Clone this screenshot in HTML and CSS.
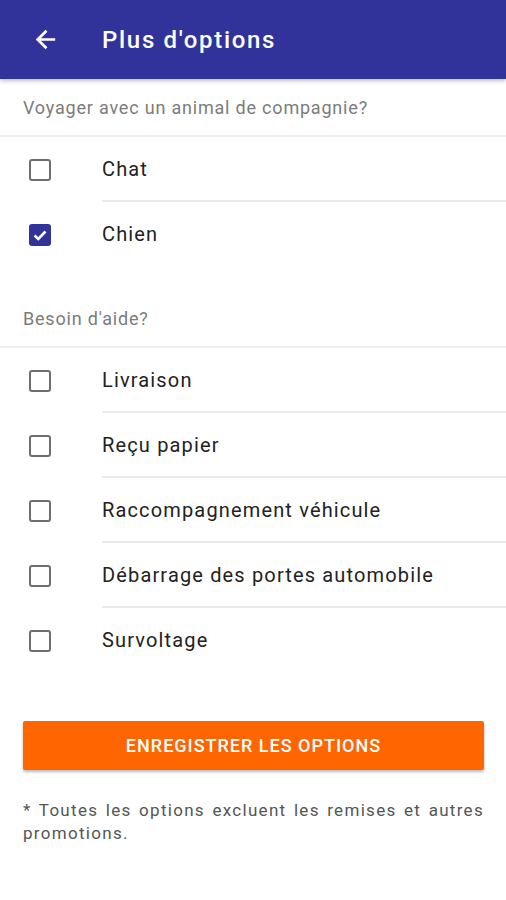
FILE: index.html
```html
<!DOCTYPE html>
<html lang="fr">
<head>
<meta charset="utf-8">
<title>Plus d'options</title>
<link rel="stylesheet" href="styles.css">
</head>
<body>
<header class="appbar">
  <svg class="back" width="24" height="24" viewBox="0 0 24 24"><path d="M20 12H5M12 4.5L4.5 12L12 19.5" fill="none" stroke="#fff" stroke-width="2.6" stroke-linecap="square"/></svg>
  <h1 class="title">Plus d'options</h1>
</header>
<main>
  <section class="section">
    <div class="section-head">Voyager avec un animal de compagnie?</div>
    <ul class="list">
      <li class="row"><span class="cb"></span><span class="label">Chat</span></li>
      <li class="row"><span class="cb checked"><svg viewBox="0 0 22 22" width="22" height="22"><path d="M5.5 11.5L9.3 15L16.5 7.5" fill="none" stroke="#fff" stroke-width="2.6"/></svg></span><span class="label">Chien</span></li>
    </ul>
  </section>
  <section class="section second">
    <div class="section-head">Besoin d'aide?</div>
    <ul class="list">
      <li class="row"><span class="cb"></span><span class="label">Livraison</span></li>
      <li class="row"><span class="cb"></span><span class="label">Reçu papier</span></li>
      <li class="row"><span class="cb"></span><span class="label">Raccompagnement véhicule</span></li>
      <li class="row"><span class="cb"></span><span class="label">Débarrage des portes automobile</span></li>
      <li class="row"><span class="cb"></span><span class="label">Survoltage</span></li>
    </ul>
  </section>
  <div class="actions">
    <button class="save">ENREGISTRER LES OPTIONS</button>
    <p class="note">* Toutes les options excluent les remises et autres promotions.</p>
  </div>
</main>
</body>
</html>
```

FILE: styles.css
```css
* { box-sizing: border-box; }
html, body { margin: 0; padding: 0; background: #fff; }
body { font-family: Roboto, "Noto Sans", sans-serif; color: #212121; width: 506px; }

.appbar {
  height: 79px;
  background: #32339a;
  display: flex;
  align-items: center;
  padding-left: 33px;
  box-shadow: 0 2px 4px rgba(0,0,0,0.25);
  position: relative;
  z-index: 1;
}
.back { width: 25px; height: 25px; }
.title {
  margin: 0 0 0 44px;
  font-size: 24px;
  font-weight: 500;
  color: #fff;
  letter-spacing: 1.7px;
}

.section-head {
  height: 58px;
  padding: 0 23px;
  display: flex;
  align-items: center;
  font-size: 18px;
  color: #7c7c7c;
  letter-spacing: 0.8px;
  border-bottom: 2px solid #eeeeee;
}
.second { margin-top: 23px; }

.list { list-style: none; margin: 0; padding: 0; }
.row {
  height: 65px;
  display: flex;
  align-items: center;
  padding-left: 29px;
  position: relative;
}
.row:not(:last-child)::after {
  content: "";
  position: absolute;
  left: 102px; right: 0; bottom: 0;
  height: 2px;
  background: #ebebeb;
}
.cb {
  width: 22px; height: 22px;
  border: 2.5px solid #6e6e6e;
  border-radius: 3px;
  flex: none;
  display: flex;
  align-items: center;
  justify-content: center;
}
.cb.checked { background: #32339a; border-color: #32339a; }
.cb.checked svg { flex: none; }
.label {
  margin-left: 51px;
  margin-top: -1px;
  font-size: 20px;
  color: #222;
  letter-spacing: 1.15px;
}

.actions { padding: 48px 22px 0 23px; }
.save {
  display: block;
  width: 100%;
  height: 49px;
  border: none;
  border-radius: 2px;
  background: #ff6600;
  color: #fff;
  font-family: Roboto, sans-serif;
  font-weight: 500;
  font-size: 18px;
  letter-spacing: 1px;
  box-shadow: 0 2px 3px rgba(0,0,0,0.28);
}
.note {
  margin: 29px 0 0;
  font-size: 17px;
  line-height: 23px;
  color: #555;
  text-align: justify;
  letter-spacing: 1.3px;
}
```
